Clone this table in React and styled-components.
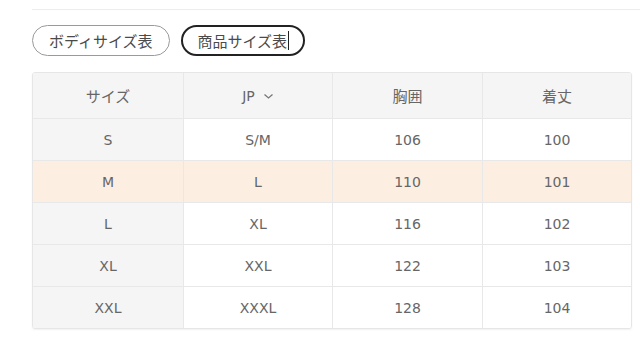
import React from "react";
import styled, { createGlobalStyle } from "styled-components";

const Global = createGlobalStyle`
  html, body {
    margin: 0;
    padding: 0;
    background: #fff;
  }
  body {
    font-family: "DejaVu Sans", "Noto Sans CJK JP", sans-serif;
    color: #555;
  }
`;

const Page = styled.div`
  width: 640px;
  height: 360px;
  padding: 9px 8px 0 32px;
  box-sizing: border-box;
  overflow: hidden;
`;

const Rule = styled.div`
  height: 1px;
  background: #ececec;
  margin-right: -8px;
`;

const Tabs = styled.div`
  display: flex;
  gap: 11px;
  margin-top: 15px;
`;

const Tab = styled.button`
  height: 31px;
  box-sizing: border-box;
  border-radius: 16px;
  background: #fff;
  font-family: "Noto Sans CJK JP", sans-serif;
  font-size: 15px;
  color: #4a4a4a;
  display: flex;
  align-items: center;
  border: ${(p) => (p.$active ? "2px solid #222" : "1px solid #9a9a9a")};
  padding: ${(p) => (p.$active ? "0 14px 0 15px" : "0 16px")};
`;

const Caret = styled.span`
  display: inline-block;
  width: 1px;
  height: 19px;
  background: #222;
  margin-left: 1px;
`;

const Table = styled.div`
  margin-top: 16px;
  width: 600px;
  box-sizing: border-box;
  border: 1px solid #e6e6e6;
  border-radius: 3px;
  box-shadow: 0 1px 2px rgba(0, 0, 0, 0.06);
  overflow: hidden;
`;

const Row = styled.div`
  display: grid;
  grid-template-columns: 150px 149px 150px 1fr;
  box-sizing: border-box;
  height: ${(p) => (p.$head ? "45px" : "42px")};
  border-top: ${(p) => (p.$first ? "none" : "1px solid #e8e8e8")};
`;

const Cell = styled.div`
  display: flex;
  align-items: center;
  justify-content: center;
  gap: 8px;
  color: #666;
  border-left: ${(p) => (p.$firstCol ? "none" : "1px solid #e8e8e8")};
  background: ${(p) =>
    p.$hl ? "#fdeee2" : p.$grey ? "#f5f5f5" : "#fff"};
  font-family: ${(p) =>
    p.$jp ? '"Noto Sans CJK JP", sans-serif' : '"DejaVu Sans", sans-serif'};
  font-size: ${(p) => (p.$jp ? "15px" : "14px")};
`;

const Chevron = () => (
  <svg width="11" height="10" viewBox="0 0 11 10">
    <path d="M1.5 3.5 L5.5 7 L9.5 3.5" fill="none" stroke="#777" strokeWidth="1.3" />
  </svg>
);

const rows = [
  ["S", "S/M", "106", "100"],
  ["M", "L", "110", "101"],
  ["L", "XL", "116", "102"],
  ["XL", "XXL", "122", "103"],
  ["XXL", "XXXL", "128", "104"],
];

export default function App() {
  return (
    <Page>
      <Global />
      <Rule />
      <Tabs>
        <Tab>ボディサイズ表</Tab>
        <Tab $active>
          商品サイズ表
          <Caret />
        </Tab>
      </Tabs>
      <Table>
        <Row $head $first>
          <Cell $firstCol $grey $jp>サイズ</Cell>
          <Cell $grey>
            JP
            <Chevron />
          </Cell>
          <Cell $grey $jp>胸囲</Cell>
          <Cell $grey $jp>着丈</Cell>
        </Row>
        {rows.map((r) => {
          const hl = r[0] === "M";
          return (
            <Row key={r[0]}>
              <Cell $firstCol $grey $hl={hl}>{r[0]}</Cell>
              <Cell $hl={hl}>{r[1]}</Cell>
              <Cell $hl={hl}>{r[2]}</Cell>
              <Cell $hl={hl}>{r[3]}</Cell>
            </Row>
          );
        })}
      </Table>
    </Page>
  );
}
